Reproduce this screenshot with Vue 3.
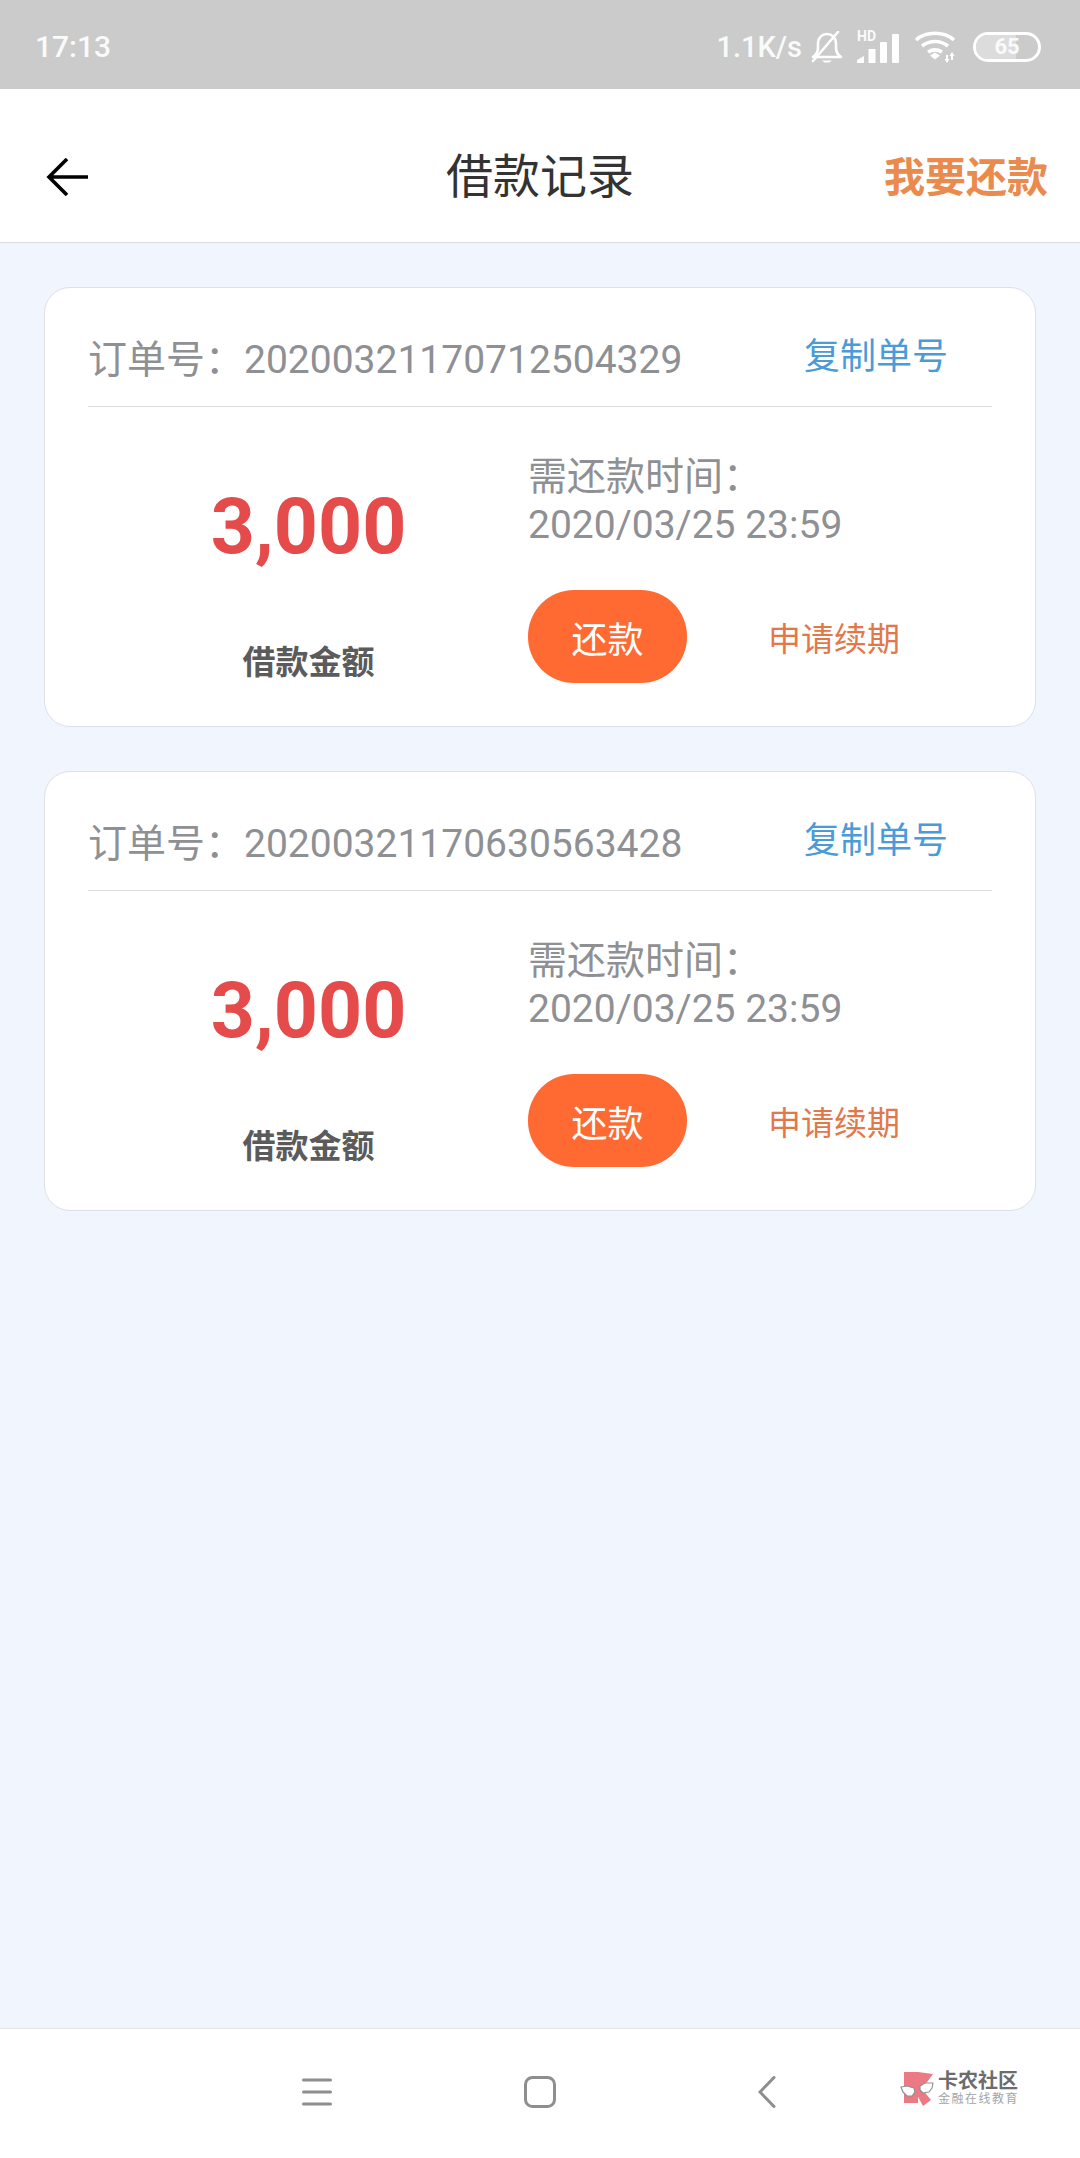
<template>
  <div class="page">
    <!-- status bar -->
    <div class="status-bar">
      <span class="clock">17:13</span>
      <div class="status-right">
        <span class="speed">1.1K/s</span>
        <svg class="bell" width="34" height="32" viewBox="0 0 34 32" fill="none" stroke="#fff" stroke-width="2.6">
          <path d="M3 26h28c-3-2-5-4-5-9v-5c0-5-4-9-9-9s-9 4-9 9v5c0 5-2 7-5 9z" stroke-linejoin="round" />
          <path d="M28 1 3 30" stroke-linecap="round" />
          <path d="M12 29.5h10l-2.5 2h-5z" fill="#fff" stroke="none" />
        </svg>
        <div class="signal">
          <span class="hd">HD</span>
          <svg width="42" height="29" viewBox="0 0 42 29" fill="#fff">
            <path d="M0 29v-3l7-4v7z" />
            <rect x="11.500" y="15" width="7" height="14" rx="1" />
            <rect x="23" y="8" width="7" height="21" rx="1" />
            <rect x="35" y="0" width="7" height="29" rx="1" />
          </svg>
        </div>
        <svg class="wifi" width="44" height="33" viewBox="0 0 44 33" fill="none" stroke="#fff" stroke-width="3.6">
          <path d="M2 10C12 1 30 1 40 10" />
          <path d="M8 16c8-6 18-6 26 0" />
          <path d="M14 22c5-3 9-3 14 0" />
          <path d="M16 25.500 21 22.500l5 3-5 4z" fill="#fff" stroke="none" />
          <path d="M33 25v7M38 23v7" stroke-width="2" />
          <path d="M30.500 29l2.500 4 2.500-4zM35.500 26l2.500-4 2.500 4z" fill="#fff" stroke="none" />
        </svg>
        <div class="battery">
          <span class="battery-fill"></span>
          <span class="battery-num">65</span>
        </div>
      </div>
    </div>

    <!-- title bar -->
    <header class="title-bar">
      <svg class="back" width="42" height="38" viewBox="0 0 42 38" fill="none" stroke="#000" stroke-width="3.6">
        <path d="M21 1 3 19l18 18M3 19h39" />
      </svg>
      <h1 class="title">借款记录</h1>
      <span class="repay-link">我要还款</span>
    </header>

    <!-- orders -->
    <main class="list">
      <section v-for="order in orders" :key="order.no" class="card">
        <div class="card-head">
          <span class="order-no">订单号：{{ order.no }}</span>
          <span class="copy">复制单号</span>
        </div>
        <div class="card-body">
          <div class="amount-col">
            <div class="amount">{{ order.amount }}</div>
            <div class="amount-label">借款金额</div>
          </div>
          <div class="info-col">
            <div class="due">需还款时间：<br />{{ order.due }}</div>
            <div class="actions">
              <button class="pay">还款</button>
              <span class="renew">申请续期</span>
            </div>
          </div>
        </div>
      </section>
    </main>

    <!-- nav bar -->
    <footer class="nav-bar">
      <svg class="nav-menu" width="30" height="28" viewBox="0 0 30 28" stroke="#8e8e8e" stroke-width="3" stroke-linecap="round">
        <path d="M1.500 2h27M1.500 14h27M1.500 26h27" />
      </svg>
      <svg class="nav-home" width="32" height="32" viewBox="0 0 32 32" fill="none" stroke="#8e8e8e" stroke-width="3">
        <rect x="1.500" y="1.500" width="29" height="29" rx="7" />
      </svg>
      <svg class="nav-back" width="18" height="32" viewBox="0 0 18 32" fill="none" stroke="#8e8e8e" stroke-width="3" stroke-linecap="round">
        <path d="M16 1.500 2 16l14 14.500" />
      </svg>
      <div class="logo">
        <svg width="35" height="36" viewBox="0 0 35 36">
          <path d="M4 1h14v31H4z" fill="#ec7a85" />
          <path d="M18 1l15 2-11 15 9 11-8 6-7-13z" fill="#ec7a85" />
          <path d="M1 16l6-1 7 2 1 4-3 4-5 0-4-4zM20 15l5-3 8 0-1 5-3 4-6 1-3-3z" fill="#fff" stroke="#8f8f8f" stroke-width="1.200" stroke-linejoin="round" />
        </svg>
        <div class="logo-text">
          <span class="logo-name">卡农社区</span>
          <span class="logo-sub">金融在线教育</span>
        </div>
      </div>
    </footer>
  </div>
</template>

<script setup>
const orders = [
  { no: '20200321170712504329', amount: '3,000', due: '2020/03/25 23:59' },
  { no: '20200321170630563428', amount: '3,000', due: '2020/03/25 23:59' }
]
</script>

<style>
body {
  margin: 0;
  background: #f1f5fd;
}
</style>

<style scoped>
.page {
  display: flex;
  flex-direction: column;
  height: 2158px;
  background: #f1f5fd;
  font-family: Roboto, "Noto Sans CJK SC", sans-serif;
  overflow: hidden;
}

.status-bar {
  display: flex;
  align-items: center;
  justify-content: space-between;
  flex: none;
  height: 89px;
  padding: 4px 39px 0 35px;
  box-sizing: border-box;
  background: #cbcbcb;
  color: #fafafa;
}
.clock {
  font-size: 30px;
  font-weight: 500;
}
.status-right {
  display: flex;
  align-items: center;
}
.speed {
  font-size: 29px;
  font-weight: 500;
  margin-right: 8px;
}
.bell {
  margin-right: 13px;
}
.signal {
  position: relative;
  width: 42px;
  height: 32px;
  margin-right: 15px;
}
.signal svg {
  position: absolute;
  left: 0;
  bottom: 0;
}
.hd {
  position: absolute;
  left: 0;
  top: -2px;
  font-size: 14px;
  line-height: 14px;
  font-weight: 700;
}
.wifi {
  margin-right: 15px;
}
.battery {
  position: relative;
  display: flex;
  align-items: center;
  justify-content: center;
  width: 68px;
  height: 30px;
  box-sizing: border-box;
  border: 3px solid #fff;
  border-radius: 15px;
  overflow: hidden;
}
.battery-fill {
  position: absolute;
  left: 0;
  top: 0;
  bottom: 0;
  width: 65%;
  background: #dcdcdc;
}
.battery-num {
  position: relative;
  font-size: 22px;
  font-weight: 700;
  line-height: 24px;
}

.title-bar {
  display: flex;
  align-items: center;
  flex: none;
  height: 154px;
  padding: 22px 32px 0 46px;
  box-sizing: border-box;
  background: #fff;
  border-bottom: 1px solid #d9dbe0;
}
.title {
  margin: 0 0 0 358px;
  font-size: 47px;
  font-weight: 400;
  line-height: 60px;
  color: #333;
}
.repay-link {
  margin-left: auto;
  margin-bottom: 5px;
  font-size: 41px;
  font-weight: 700;
  color: #ea8a4c;
}

.list {
  flex: 1;
  display: flex;
  flex-direction: column;
  gap: 44px;
  padding: 44px 44px 0;
}
.card {
  box-sizing: border-box;
  height: 440px;
  padding: 0 43px;
  background: #fff;
  border: 1px solid #dde0e8;
  border-radius: 26px;
}
.card-head {
  display: flex;
  justify-content: space-between;
  height: 119px;
  box-sizing: border-box;
  padding: 45px 44px 0 0;
  border-bottom: 1px solid #dcdee3;
}
.order-no {
  font-size: 39px;
  line-height: 48px;
  padding-top: 3px;
  color: #8e9094;
}
.copy {
  font-size: 36px;
  line-height: 48px;
  color: #4a9bd8;
}
.card-body {
  display: flex;
}
.amount-col {
  width: 440px;
  flex: none;
  text-align: center;
  padding: 75px 0 0 1px;
  box-sizing: border-box;
}
.amount {
  font-size: 77px;
  font-weight: 700;
  line-height: 90px;
  color: #e54b4b;
}
.amount-label {
  margin-top: 71px;
  font-size: 33px;
  font-weight: 700;
  line-height: 40px;
  color: #5b5b5b;
}
.info-col {
  padding-top: 46px;
}
.due {
  font-size: 39px;
  line-height: 48px;
  color: #8e9094;
}
.actions {
  display: flex;
  align-items: center;
  margin-top: 41px;
}
.pay {
  width: 159px;
  height: 93px;
  padding: 0;
  border: none;
  border-radius: 46px;
  background: #ff6a33;
  color: #fff;
  font-family: inherit;
  font-size: 36px;
}
.renew {
  margin-left: 81px;
  font-size: 33px;
  color: #e2784a;
}

.nav-bar {
  display: flex;
  align-items: center;
  flex: none;
  height: 130px;
  box-sizing: border-box;
  padding: 0 0 4px 302px;
  background: #fff;
  border-top: 1px solid #e4e6ea;
}
.nav-home {
  margin-left: 192px;
}
.nav-back {
  margin-left: 202px;
}
.logo {
  display: flex;
  align-items: center;
  margin-left: 124px;
  margin-bottom: 5px;
}
.logo-text {
  display: flex;
  flex-direction: column;
  margin-left: 3px;
}
.logo-name {
  font-size: 20px;
  line-height: 21px;
  font-weight: 700;
  color: #6c6c6c;
}
.logo-sub {
  font-size: 12px;
  line-height: 15px;
  letter-spacing: 1.500px;
  color: #a5a5a5;
}
</style>
